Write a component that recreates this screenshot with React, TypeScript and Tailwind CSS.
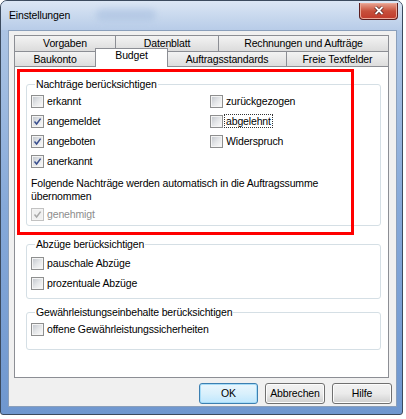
import React from "react";

const font = { fontFamily: '"Liberation Sans", Arial, sans-serif' };

function Check({ checked = false, disabled = false }: { checked?: boolean; disabled?: boolean }) {
  return (
    <span
      className={
        "relative flex h-[13px] w-[13px] shrink-0 items-center justify-center border p-[1px] " +
        (disabled ? "border-[#c2c2c2] bg-[#f4f4f4]" : "border-[#8e8f8f] bg-[#f4f4f4]")
      }
    >
      <span
        className={
          "block h-full w-full " +
          (disabled
            ? "bg-[#f0f0f0]"
            : "bg-gradient-to-br from-[#c6cad0] via-[#e4e6e8] to-[#f8f8f8]")
        }
      />
      {checked && (
        <svg className="absolute left-[1px] top-[1px]" width="9" height="9" viewBox="0 0 9 9">
          <path
            d="M1.5 4.6 L3.6 7 L7.6 1.6"
            fill="none"
            stroke={disabled ? "#a8a8a8" : "#3a4f8f"}
            strokeWidth="1.5"
          />
        </svg>
      )}
    </span>
  );
}

function Row({
  label,
  checked,
  disabled,
  focus,
}: {
  label: string;
  checked?: boolean;
  disabled?: boolean;
  focus?: boolean;
}) {
  return (
    <div className="flex h-[20px] items-center">
      <Check checked={checked} disabled={disabled} />
      <span
        className={
          "ml-[1px] px-[1px] leading-[12px] " +
          (focus ? "border border-dotted border-[#333]" : "border border-transparent") +
          (disabled ? " text-[#8d8d8d]" : " text-[#000]")
        }
      >
        {label}
      </span>
    </div>
  );
}

function Tab({
  label,
  w,
  first,
  selected,
}: {
  label: string;
  w: number;
  first?: boolean;
  selected?: boolean;
}) {
  return (
    <div
      style={{ width: w }}
      className={
        "flex items-center justify-center border border-b-0 border-[#8c8e94] " +
        (first ? "" : "-ml-px ") +
        (selected
          ? "relative z-10 -mt-[3px] h-[19px] bg-white pb-[4px]"
          : "h-[16px] bg-gradient-to-b from-[#f3f3f3] to-[#dcdcdc]")
      }
    >
      {label}
    </div>
  );
}

function Button({ label, w, def }: { label: string; w: number; def?: boolean }) {
  return (
    <div
      style={{ width: w }}
      className={
        "flex h-[21px] items-center justify-center rounded-[3px] border " +
        (def
          ? "border-[#3c7fb1] bg-gradient-to-b from-[#eaf6fd] via-[#d9f0fc] to-[#bee6fd] shadow-[inset_0_0_0_1px_#a6dcf8]"
          : "border-[#707070] bg-gradient-to-b from-[#f2f2f2] via-[#ebebeb] to-[#cfcfcf] shadow-[inset_0_0_0_1px_#fcfcfc]")
      }
    >
      {label}
    </div>
  );
}

export default function App() {
  return (
    <div className="h-[419px] w-[406px] bg-white text-[10.5px] tracking-[-0.15px] text-black" style={font}>
      <div className="flex h-[415px] w-[403px] flex-col rounded-t-[7px] rounded-b-[3px] border border-[#3b4a5e] bg-gradient-to-b from-[#b3c9e6] via-[#86a9d9] to-[#6f97cf]">
        {/* title bar */}
        <div className="relative flex h-[29px] shrink-0 items-center rounded-t-[6px] bg-gradient-to-b from-[#dbe6f4] via-[#c9d9ee] to-[#b8cce8] pl-[8px]">
          <div className="absolute left-[95px] top-[8px] h-[12px] w-[60px] rounded-full bg-[#a9c0e0] opacity-60 blur-[3px]" />
          <span className="relative text-[10.5px] text-black">Einstellungen</span>
          <div className="ml-auto mr-[4px] mt-[-9px] flex h-[17px] w-[39px] items-center justify-center rounded-b-[4px] border border-t-0 border-[#5b1e1e] bg-gradient-to-b from-[#e8a493] via-[#c7503c] to-[#c0392b] shadow-[inset_0_0_0_1px_#eba898]">
            <svg width="10" height="9" viewBox="0 0 10 9">
              <path d="M1.5 1 L8.5 8 M8.5 1 L1.5 8" stroke="#4a1a1a" strokeWidth="3.2" />
              <path d="M1.5 1 L8.5 8 M8.5 1 L1.5 8" stroke="#ffffff" strokeWidth="1.8" />
            </svg>
          </div>
        </div>
        {/* client */}
        <div className="ml-[7px] flex h-[377px] w-[389px] flex-col border border-[#8a9fbb] bg-[#f0f0f0]">
          {/* tabs */}
          <div className="ml-[5px] mt-[4px] flex flex-col">
            <div className="flex">
              <Tab label="Vorgaben" w={102} first />
              <Tab label="Datenblatt" w={104} />
              <Tab label="Rechnungen und Aufträge" w={171} />
            </div>
            <div className="flex">
              <Tab label="Baukonto" w={82} first />
              <Tab label="Budget" w={73} selected />
              <Tab label="Auftragsstandards" w={120} />
              <Tab label="Freie Textfelder" w={103} />
            </div>
          </div>
          {/* panel */}
          <div className="relative -mt-px ml-[5px] h-[312px] w-[375px] border border-[#8c8e94] bg-white">
            <fieldset className="ml-[11px] mt-[11px] w-[355px] rounded-[3px] border border-[#d5dfe5] pb-[1px] pl-[4px]">
              <legend className="ml-[4px] px-[1px] leading-[13px] text-[#000]">Nachträge berücksichtigen</legend>
              <div className="grid grid-cols-[179px_1fr]">
                <div className="flex flex-col">
                  <Row label="erkannt" />
                  <Row label="angemeldet" checked />
                  <Row label="angeboten" checked />
                  <Row label="anerkannt" checked />
                </div>
                <div className="flex flex-col">
                  <Row label="zurückgezogen" />
                  <Row label="abgelehnt" focus />
                  <Row label="Widerspruch" />
                </div>
              </div>
              <p className="mt-[6px] leading-[13px]">
                Folgende Nachträge werden automatisch in die Auftragssumme
                <br />
                übernommen
              </p>
              <div className="mt-[1px]">
                <Row label="genehmigt" checked disabled />
              </div>
            </fieldset>
            <fieldset className="ml-[11px] mt-[12px] w-[355px] rounded-[3px] border border-[#d5dfe5] pb-[5px] pl-[4px]">
              <legend className="ml-[4px] px-[1px] leading-[13px]">Abzüge berücksichtigen</legend>
              <div className="mt-[2px] flex flex-col">
                <Row label="pauschale Abzüge" />
                <Row label="prozentuale Abzüge" />
              </div>
            </fieldset>
            <fieldset className="ml-[11px] mt-[7px] w-[355px] rounded-[3px] border border-[#d5dfe5] pb-[10px] pl-[4px]">
              <legend className="ml-[4px] px-[1px] leading-[13px]">Gewährleistungseinbehalte berücksichtigen</legend>
              <div className="flex flex-col">
                <Row label="offene Gewährleistungssicherheiten" />
              </div>
            </fieldset>
            {/* red annotation */}
            <div className="pointer-events-none absolute left-[2px] top-[2px] h-[166px] w-[337px] border-[3px] border-[#ff0000]" />
          </div>
          {/* buttons */}
          <div className="mr-[4px] mt-[5px] flex justify-end gap-[7px]">
            <Button label="OK" w={59} def />
            <Button label="Abbrechen" w={60} />
            <Button label="Hilfe" w={60} />
          </div>
        </div>
      </div>
    </div>
  );
}
